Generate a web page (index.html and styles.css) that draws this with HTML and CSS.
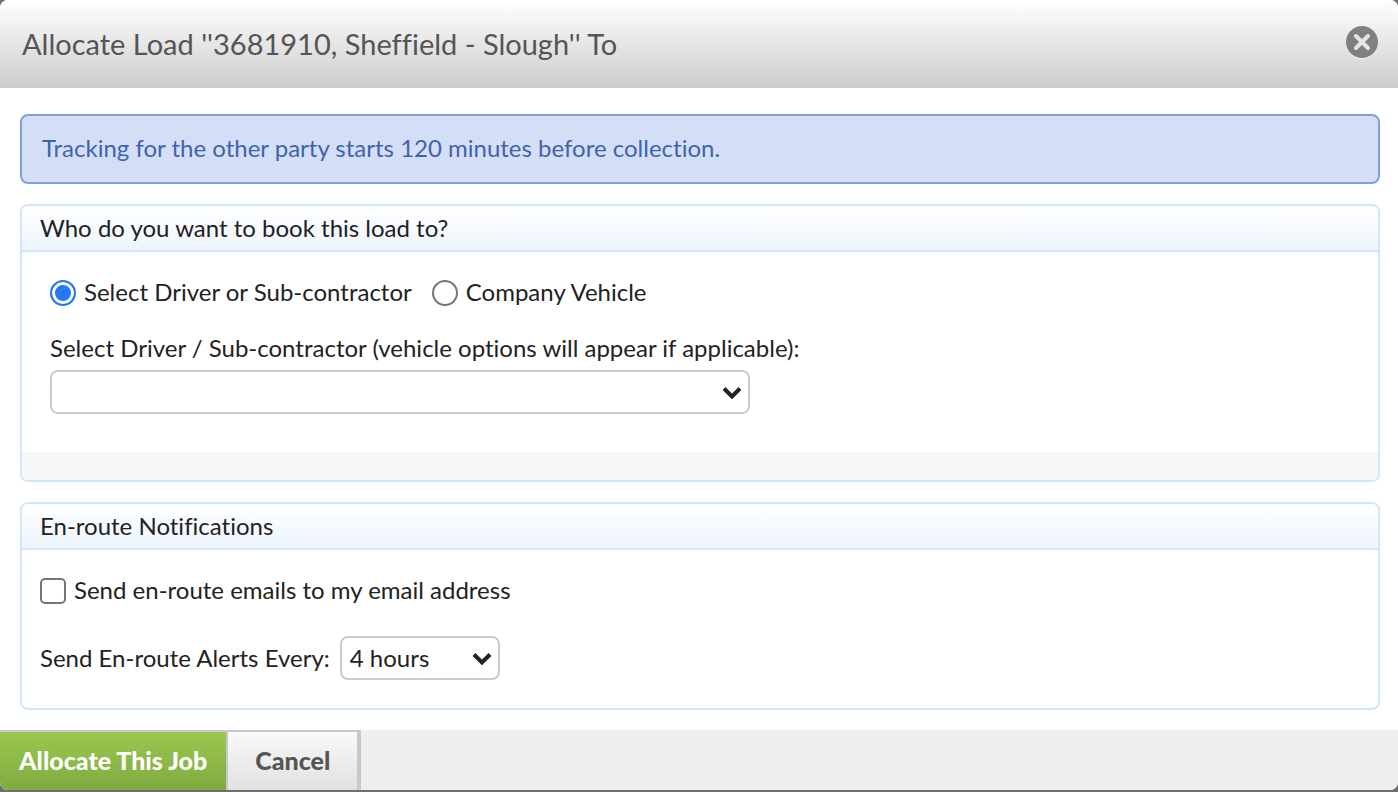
FILE: index.html
```html
<!DOCTYPE html>
<html lang="en">
<head>
    <meta charset="UTF-8">
    <meta name="viewport" content="width=device-width, initial-scale=1">
    <title>Allocate Load</title>
    <link rel="stylesheet" href="styles.css">
</head>
<body>
    <form class="dialog" role="dialog" aria-labelledby="dialogTitle">
        <header class="dialog-header">
            <h1 id="dialogTitle">Allocate Load ''3681910, Sheffield - Slough'' To</h1>
            <button type="button" class="close-btn" aria-label="Close">
                <svg width="32" height="34" viewBox="0 0 32 34">
                    <circle cx="16" cy="17" r="16" fill="#f2f2f2"/>
                    <circle cx="16" cy="16" r="16" fill="#808080"/>
                    <path d="M10 10l12 12M22 10L10 22" stroke="#e6e6e6" stroke-width="4" stroke-linecap="round"/>
                </svg>
            </button>
        </header>

        <main class="dialog-body">
            <p class="alert">Tracking for the other party starts 120 minutes before collection.</p>

            <section class="panel">
                <h2 class="panel-head">Who do you want to book this load to?</h2>
                <div class="panel-body book-to">
                    <div class="radio-row">
                        <label class="option"><input type="radio" name="bookTo" value="driver" checked>Select Driver or Sub-contractor</label>
                        <label class="option"><input type="radio" name="bookTo" value="vehicle">Company Vehicle</label>
                    </div>
                    <label class="field-label" for="driver">Select Driver / Sub-contractor (vehicle options will appear if applicable):</label>
                    <div class="select-wrap driver-select">
                        <select id="driver">
                            <option value=""></option>
                        </select>
                        <svg class="arrow" width="20" height="14" viewBox="0 0 20 14"><path d="M2 2.5l8 8 8-8" fill="none" stroke="#222" stroke-width="4"/></svg>
                    </div>
                </div>
                <div class="panel-foot"></div>
            </section>

            <section class="panel">
                <h2 class="panel-head">En-route Notifications</h2>
                <div class="panel-body notifications">
                    <label class="option"><input type="checkbox" name="sendEmails">Send en-route emails to my email address</label>
                    <div class="alert-row">
                        <label for="interval">Send En-route Alerts Every:</label>
                        <div class="select-wrap interval-select">
                            <select id="interval">
                                <option>1 hour</option>
                                <option>2 hours</option>
                                <option selected>4 hours</option>
                            </select>
                            <svg class="arrow" width="20" height="14" viewBox="0 0 20 14"><path d="M2 2.5l8 8 8-8" fill="none" stroke="#222" stroke-width="4"/></svg>
                        </div>
                    </div>
                </div>
            </section>
        </main>

        <footer class="dialog-footer">
            <button type="submit" class="btn btn-primary">Allocate This Job</button>
            <button type="button" class="btn btn-cancel">Cancel</button>
        </footer>
    </form>
</body>
</html>
```
FILE: styles.css
```css
* { box-sizing: border-box; }
body { margin: 0; padding-bottom: 2px; background: #6e6e6e; color: #222; font: 24px/32px Lato, "Open Sans", sans-serif; font-variant-ligatures: none; }
h1, h2, p { margin: 0; font-weight: normal; }

.dialog { background: #fff; border-radius: 8px; overflow: hidden; }
.dialog-header { display: flex; justify-content: space-between; align-items: flex-start; height: 88px; padding: 26px 20px 0 22px; background: linear-gradient(#fff, #cdcdcd); }
.dialog-header h1 { font-size: 29px; line-height: 36px; color: #555; }
.close-btn { padding: 0; border: 0; background: none; cursor: pointer; }
.close-btn svg { display: block; }

.dialog-body { display: flex; flex-direction: column; gap: 20px; padding: 26px 18px 20px 20px; }
.alert { padding: 16px 20px 18px; border: 2px solid #829fd9; border-radius: 8px; background: #d4dff7; color: #4163ab; }

.panel { border: 2px solid #d3e7fc; border-radius: 8px; overflow: hidden; }
.panel-head { padding: 6px 18px; border-bottom: 2px solid #d3e7fc; background: linear-gradient(#fff, #edf5fe); font-size: 24px; }
.panel-foot { height: 28px; background: #f7f7f7; }
.book-to { padding: 24px 28px 38px; }
.notifications { padding: 24px 18px 28px; }

.radio-row { display: flex; gap: 20px; margin-bottom: 24px; }
.option { display: flex; align-items: center; gap: 8px; }
.field-label { display: block; margin-bottom: 6px; }

input[type="radio"], input[type="checkbox"] { appearance: none; flex: none; width: 26px; height: 26px; margin: 2px 0 0; border: 2px solid #767676; background: #fff; }
input[type="radio"] { border-radius: 50%; }
input[type="radio"]:checked { border-color: #2776f6; background: #2776f6; box-shadow: inset 0 0 0 3px #fff; }
input[type="checkbox"] { border-radius: 5px; }
input[type="checkbox"]:checked { background: #2776f6; }

.select-wrap { display: flex; position: relative; }
.select-wrap select { appearance: none; width: 100%; height: 44px; padding: 0 40px 0 8px; border: 2px solid #ccc; border-radius: 8px; background: #fff; color: #222; font: inherit; }
.arrow { position: absolute; right: 8px; top: 16px; pointer-events: none; }
.driver-select { max-width: 700px; }
.interval-select { width: 160px; }
.alert-row { display: flex; align-items: center; gap: 10px; margin-top: 30px; }

.dialog-footer { display: flex; background: #efefef; }
.btn { height: 60px; padding-bottom: 4px; border: 0 solid #c5c8d0; border-top-width: 2px; font: 900 25px/32px Lato, "Open Sans", sans-serif; cursor: pointer; }
.btn-primary { padding-left: 19px; padding-right: 19px; border-right-width: 2px; background: linear-gradient(#9ac84e, #80aa41); color: #fff; }
.btn-cancel { padding-left: 27px; padding-right: 27px; border-right-width: 4px; background: linear-gradient(#f9f9f9, #e1e1e1); color: #555; }
```
